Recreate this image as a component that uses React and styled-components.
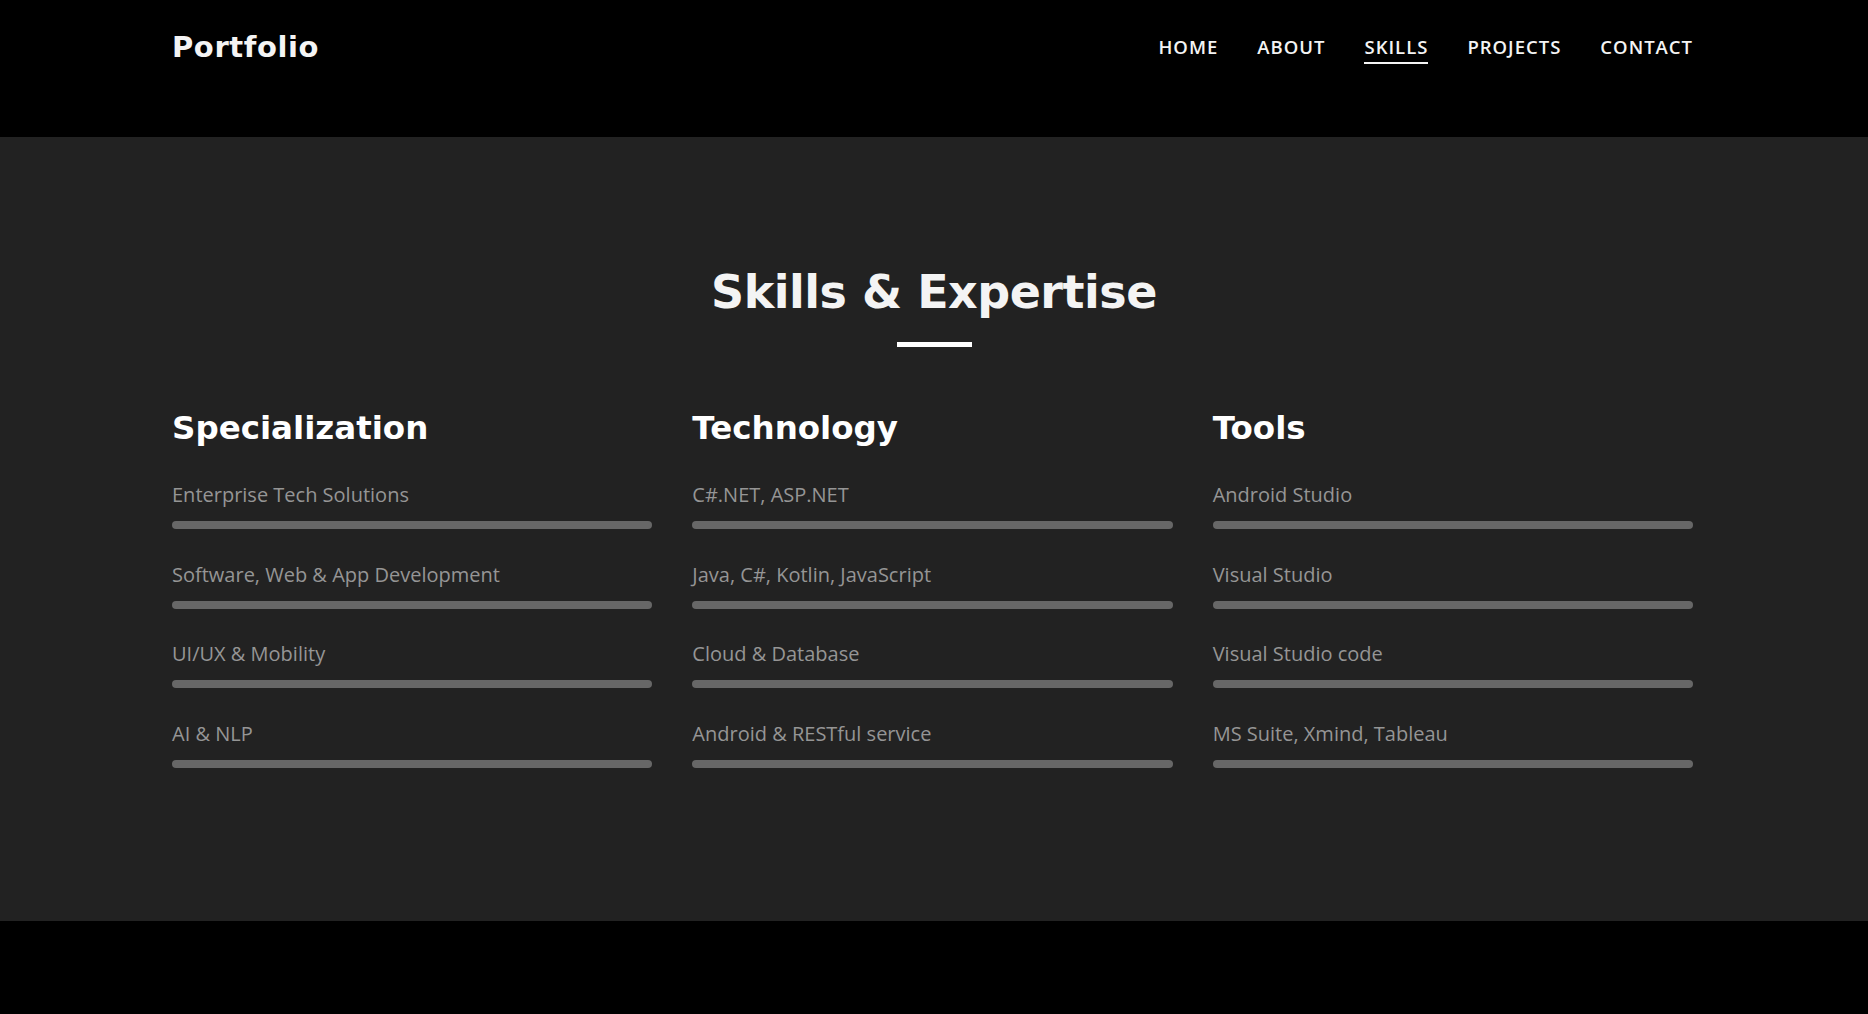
import React from "react";
import styled, { createGlobalStyle } from "styled-components";

const GlobalStyle = createGlobalStyle`
  html, body { margin: 0; padding: 0; background: #000; }
  body { font-family: "Open Sans", "Liberation Sans", sans-serif; }
  * { box-sizing: border-box; }
`;

const Page = styled.div`
  min-height: 1014px;
  background: #000;
`;

const Header = styled.header`
  height: 137px;
  background: #000;
`;

const Container = styled.div`
  width: 100%;
  padding: 0 175px 0 172px;
`;

const NavBar = styled(Container)`
  display: flex;
  justify-content: space-between;
  align-items: flex-start;
  padding-top: 29px;
`;

const Brand = styled.div`
  font-family: "DejaVu Sans", "Liberation Sans", sans-serif;
  font-weight: 700;
  font-size: 29px;
  line-height: 36px;
  color: #f4f4f4;
  letter-spacing: 0.6px;
`;

const NavList = styled.nav`
  display: flex;
  gap: 39px;
  padding-top: 5px;
`;

const NavLink = styled.a`
  font-family: "Open Sans", sans-serif;
  font-weight: 600;
  font-size: 18.5px;
  line-height: 26px;
  letter-spacing: 1px;
  color: #f4f4f4;
  text-decoration: none;
  padding-bottom: 2px;
  border-bottom: 2px solid ${(p) => (p.$active ? "#f4f4f4" : "transparent")};
`;

const Section = styled.section`
  background: #222222;
  padding: 124px 0 122px;
`;

const Title = styled.h2`
  margin: 0;
  text-align: center;
  font-family: "DejaVu Sans", "Liberation Sans", sans-serif;
  font-weight: 700;
  font-size: 46px;
  line-height: 62px;
  letter-spacing: -0.5px;
  color: #f4f4f4;
`;

const TitleRule = styled.div`
  width: 75px;
  height: 5px;
  background: #fff;
  margin: 19px auto 0;
`;

const Columns = styled(Container)`
  display: grid;
  grid-template-columns: repeat(3, 1fr);
  gap: 40px;
  margin-top: 58px;
`;

const Column = styled.div`
  display: flex;
  flex-direction: column;
`;

const ColumnTitle = styled.h3`
  margin: 0 0 30px;
  font-family: "DejaVu Sans", "Liberation Sans", sans-serif;
  font-weight: 700;
  font-size: 32.5px;
  line-height: 46px;
  color: #fff;
`;

const SkillRow = styled.div`
  display: flex;
  flex-direction: column;
  gap: 12px;
  margin-bottom: 31.5px;
`;

const SkillLabel = styled.div`
  font-family: "Open Sans", sans-serif;
  font-size: 20px;
  line-height: 28px;
  color: #959595;
`;

const Bar = styled.div`
  height: 8px;
  border-radius: 4px;
  background: #676767;
`;

const columns = [
  {
    title: "Specialization",
    items: [
      "Enterprise Tech Solutions",
      "Software, Web & App Development",
      "UI/UX & Mobility",
      "AI & NLP",
    ],
  },
  {
    title: "Technology",
    items: [
      "C#.NET, ASP.NET",
      "Java, C#, Kotlin, JavaScript",
      "Cloud & Database",
      "Android & RESTful service",
    ],
  },
  {
    title: "Tools",
    items: [
      "Android Studio",
      "Visual Studio",
      "Visual Studio code",
      "MS Suite, Xmind, Tableau",
    ],
  },
];

const navItems = ["HOME", "ABOUT", "SKILLS", "PROJECTS", "CONTACT"];

export default function App() {
  return (
    <Page>
      <GlobalStyle />
      <Header>
        <NavBar>
          <Brand>Portfolio</Brand>
          <NavList>
            {navItems.map((n) => (
              <NavLink key={n} href="#" $active={n === "SKILLS"}>
                {n}
              </NavLink>
            ))}
          </NavList>
        </NavBar>
      </Header>
      <Section>
        <Title>Skills &amp; Expertise</Title>
        <TitleRule />
        <Columns>
          {columns.map((c) => (
            <Column key={c.title}>
              <ColumnTitle>{c.title}</ColumnTitle>
              {c.items.map((it) => (
                <SkillRow key={it}>
                  <SkillLabel>{it}</SkillLabel>
                  <Bar />
                </SkillRow>
              ))}
            </Column>
          ))}
        </Columns>
      </Section>
    </Page>
  );
}
